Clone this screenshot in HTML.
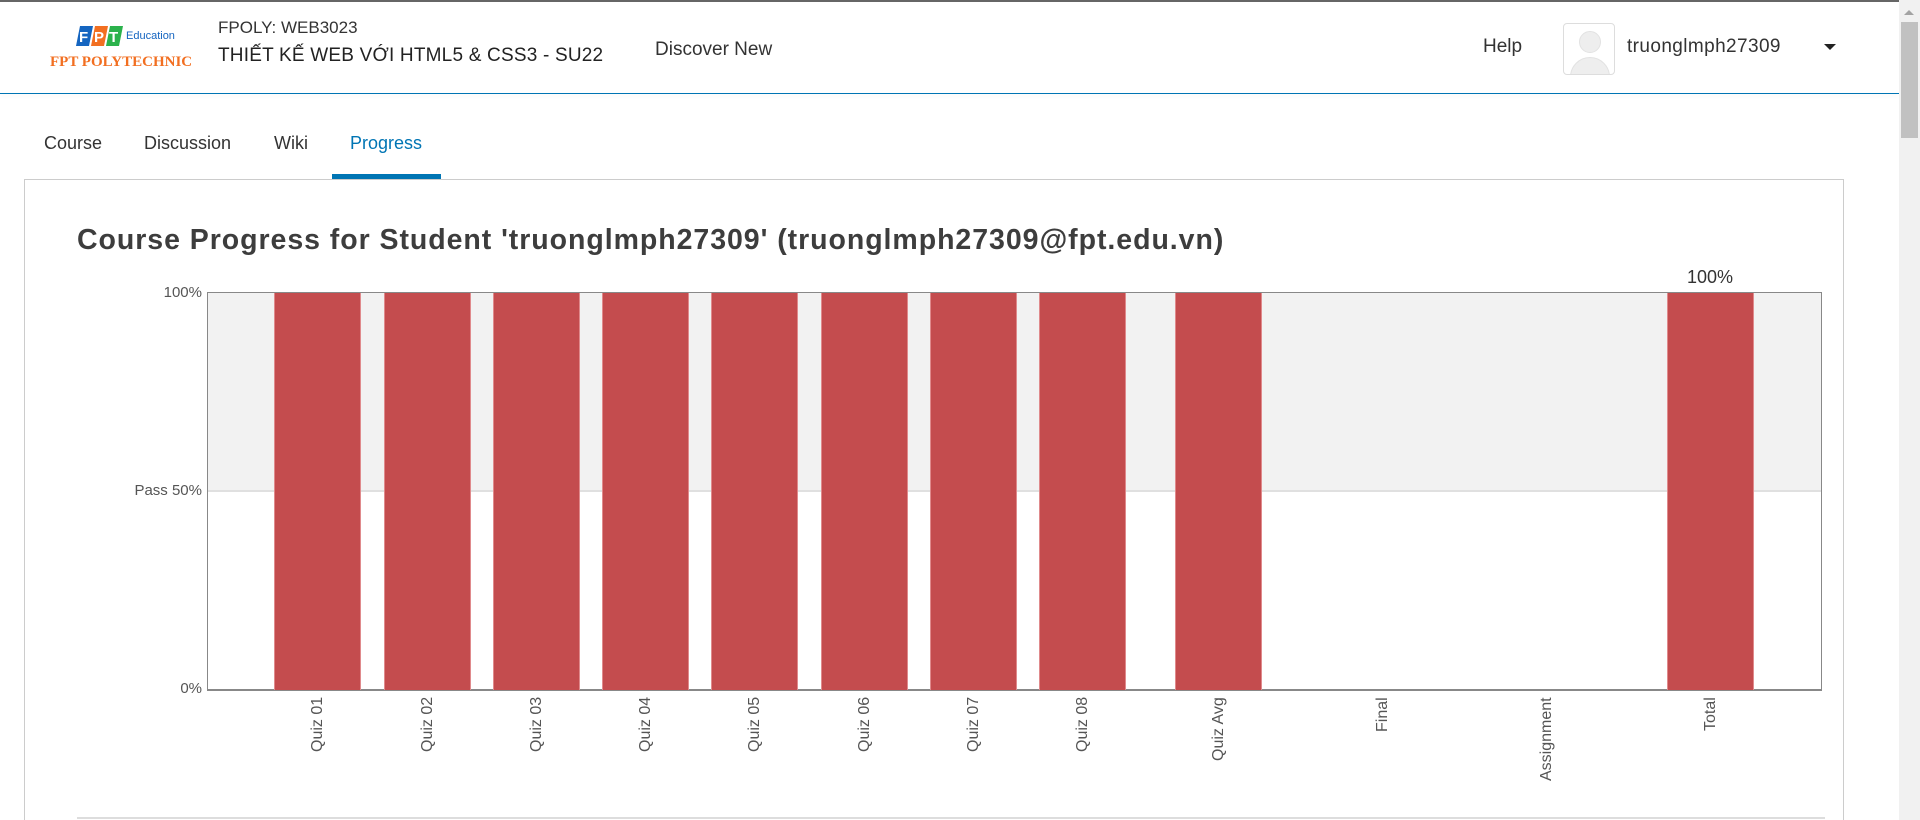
<!DOCTYPE html>
<html><head><meta charset="utf-8"><style>
*{margin:0;padding:0;box-sizing:border-box}
html,body{width:1920px;height:820px;overflow:hidden}
body{background:#fff;font-family:"Liberation Sans",sans-serif;position:relative;color:#333}
.a{position:absolute;white-space:nowrap}
.bar{position:absolute;top:293px;height:397px;width:87px;background:#c44c4e;border-left:1px solid #e08a8c;border-right:1px solid #e08a8c}
.xl{position:absolute;top:697px;height:110px;width:20px;line-height:20px;font-size:16px;color:#555;writing-mode:vertical-rl;transform:rotate(180deg);text-align:right;white-space:nowrap}
</style></head><body>
<div class="a" style="left:0;top:0;width:1920px;height:2px;background:#666"></div>
<svg class="a" style="left:76px;top:25px" width="50" height="22" viewBox="0 0 50 22">
<polygon points="4,1 17,1 13,21 0,21" fill="#1565c0"/>
<polygon points="19,1 32,1 28,21 15,21" fill="#f26f21"/>
<polygon points="34,1 47,1 43,21 30,21" fill="#2bb24c"/>
<text x="3" y="17" font-family="Liberation Sans" font-weight="bold" font-size="15" fill="#fff">F</text>
<text x="18" y="17" font-family="Liberation Sans" font-weight="bold" font-size="15" fill="#fff">P</text>
<text x="33" y="17" font-family="Liberation Sans" font-weight="bold" font-size="15" fill="#fff">T</text>
</svg>
<div class="a" style="left:126px;top:30px;font-size:11px;color:#1565c0">Education</div>
<div class="a" style="left:50px;top:54px;font-family:'Liberation Serif',serif;font-weight:bold;font-size:15px;color:#f26f21">FPT POLYTECHNIC</div>
<div class="a" style="left:218px;top:18px;font-size:17px;color:#333">FPOLY: WEB3023</div>
<div class="a" style="left:218px;top:45px;font-size:19px;color:#222;letter-spacing:0.2px">THIẾT KẾ WEB VỚI HTML5 &amp; CSS3 - SU22</div>
<div class="a" style="left:655px;top:39px;font-size:19px;color:#333">Discover New</div>
<div class="a" style="left:1483px;top:36px;font-size:19px;color:#333">Help</div>
<div class="a" style="left:1563px;top:23px;width:52px;height:52px;border:1px solid #ddd;border-radius:4px;overflow:hidden;background:#fff">
<div style="position:absolute;left:15px;top:7px;width:22px;height:22px;border-radius:50%;background:#eee;border:1px solid #e2e2e2"></div>
<div style="position:absolute;left:6px;top:33px;width:40px;height:30px;border-radius:20px 20px 0 0;background:#eee;border:1px solid #e2e2e2"></div></div>
<div class="a" style="left:1627px;top:36px;font-size:19px;color:#333;letter-spacing:0.4px">truonglmph27309</div>
<div class="a" style="left:1824px;top:44px;width:0;height:0;border-left:6px solid transparent;border-right:6px solid transparent;border-top:6px solid #222"></div>
<div class="a" style="left:0;top:93px;width:1899px;height:1px;background:#0075b4;box-shadow:0 2px 4px rgba(0,0,0,.08)"></div>
<div class="a" style="left:1899px;top:0;width:21px;height:820px;background:#f1f1f1"></div>
<div class="a" style="left:1901px;top:22px;width:17px;height:116px;background:#c1c1c1"></div>
<div class="a" style="left:1904px;top:10px;width:0;height:0;border-left:5px solid transparent;border-right:5px solid transparent;border-bottom:5px solid #a3a3a3"></div>
<div class="a" style="left:44px;top:133px;font-size:18px;color:#333">Course</div>
<div class="a" style="left:144px;top:133px;font-size:18px;color:#333">Discussion</div>
<div class="a" style="left:274px;top:133px;font-size:18px;color:#333">Wiki</div>
<div class="a" style="left:350px;top:133px;font-size:18px;color:#0075b4">Progress</div>
<div class="a" style="left:24px;top:179px;width:1820px;height:641px;border:1px solid #ccc;border-bottom:none"></div>
<div class="a" style="left:332px;top:174px;width:109px;height:5px;background:#0075b4"></div>
<div class="a" style="left:77px;top:224px;font-size:28.5px;font-weight:bold;color:#3d3d3d;letter-spacing:0.95px">Course Progress for Student 'truonglmph27309' (truonglmph27309@fpt.edu.vn)</div>
<div class="a" style="left:207px;top:292px;width:1615px;height:199px;background:#f2f2f2"></div>
<div class="a" style="left:207px;top:490px;width:1615px;height:2px;background:#e0e0e0"></div>
<div class="a" style="left:207px;top:292px;width:1615px;height:399px;border:1px solid #888;border-width:1px 1px 2px 1px"></div>
<div class="bar" style="left:274px"></div>
<div class="bar" style="left:384px"></div>
<div class="bar" style="left:493px"></div>
<div class="bar" style="left:602px"></div>
<div class="bar" style="left:711px"></div>
<div class="bar" style="left:821px"></div>
<div class="bar" style="left:930px"></div>
<div class="bar" style="left:1039px"></div>
<div class="bar" style="left:1175px"></div>
<div class="bar" style="left:1667px"></div>
<div class="a" style="left:0;top:284px;width:202px;text-align:right;font-size:15px;color:#555">100%</div>
<div class="a" style="left:0;top:482px;width:202px;text-align:right;font-size:15px;color:#555">Pass 50%</div>
<div class="a" style="left:0;top:680px;width:202px;text-align:right;font-size:15px;color:#555">0%</div>
<div class="a" style="left:1665px;top:267px;width:90px;text-align:center;font-size:18px;color:#333">100%</div>
<div class="xl" style="left:308px">Quiz 01</div>
<div class="xl" style="left:418px">Quiz 02</div>
<div class="xl" style="left:527px">Quiz 03</div>
<div class="xl" style="left:636px">Quiz 04</div>
<div class="xl" style="left:745px">Quiz 05</div>
<div class="xl" style="left:855px">Quiz 06</div>
<div class="xl" style="left:964px">Quiz 07</div>
<div class="xl" style="left:1073px">Quiz 08</div>
<div class="xl" style="left:1209px">Quiz Avg</div>
<div class="xl" style="left:1373px">Final</div>
<div class="xl" style="left:1537px">Assignment</div>
<div class="xl" style="left:1701px">Total</div>
<div class="a" style="left:77px;top:817px;width:1748px;height:2px;background:#ddd"></div>
</body></html>
